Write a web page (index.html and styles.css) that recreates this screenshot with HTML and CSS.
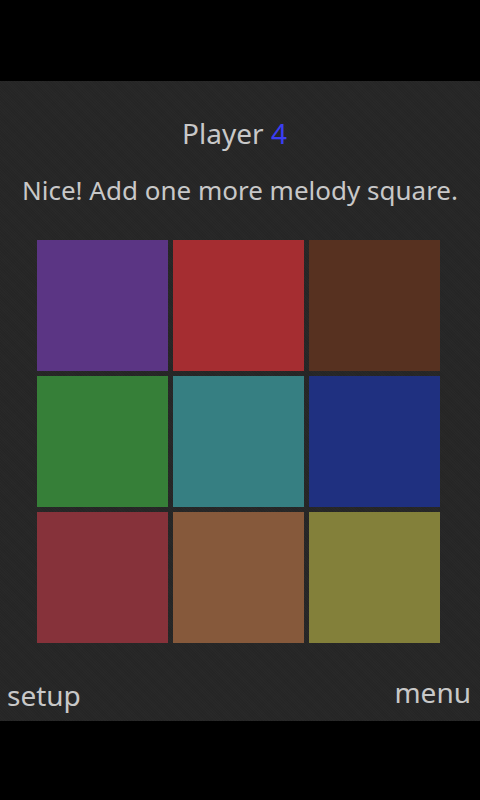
FILE: index.html
```html
<!DOCTYPE html>
<html>
<head>
<meta charset="utf-8">
<link rel="stylesheet" href="styles.css">
</head>
<body>
<div class="top"></div>
<div class="panel">
  <h1 class="title">Player <span class="num">4</span></h1>
  <p class="msg">Nice! Add one more melody square.</p>
  <div class="grid">
    <div class="sq purple"></div>
    <div class="sq red"></div>
    <div class="sq brown"></div>
    <div class="sq green"></div>
    <div class="sq teal"></div>
    <div class="sq blue"></div>
    <div class="sq maroon"></div>
    <div class="sq tan"></div>
    <div class="sq olive"></div>
  </div>
  <div class="footer">
    <span class="setup">setup</span>
    <span class="menu">menu</span>
  </div>
</div>
</body>
</html>
```

FILE: styles.css
```css
html, body {
  margin: 0;
  padding: 0;
  background: #000;
  width: 480px;
  height: 800px;
  overflow: hidden;
  font-family: "Noto Sans", "Open Sans", sans-serif;
}
.top {
  height: 81px;
}
.panel {
  height: 640px;
  background-color: #262626;
  background-image: repeating-linear-gradient(45deg, rgba(255,255,255,0.012) 0 1px, transparent 1px 2px),
                    repeating-linear-gradient(-45deg, rgba(0,0,0,0.03) 0 1px, transparent 1px 2px);
  display: flex;
  flex-direction: column;
  color: #c8c8c8;
}
.title {
  margin: 32px 11px 0 0;
  font-size: 28px;
  line-height: 40px;
  font-weight: normal;
  text-align: center;
}
.num {
  color: #3b3ef2;
}
.msg {
  margin: 19px 0 0 0;
  font-size: 26px;
  line-height: 36px;
  text-align: center;
}
.grid {
  margin: 32px 0 0 37px;
  display: grid;
  grid-template-columns: repeat(3, 131px);
  grid-auto-rows: 131px;
  gap: 5px;
}
.purple { background: #5b3584; }
.red { background: #a52d31; }
.brown { background: #573120; }
.green { background: #367f38; }
.teal { background: #367f82; }
.blue { background: #1f3080; }
.maroon { background: #86323a; }
.tan { background: #86593b; }
.olive { background: #83803a; }
.footer {
  margin-top: auto;
  display: flex;
  justify-content: space-between;
  align-items: flex-end;
  font-size: 28px;
  line-height: 28px;
}
.setup {
  margin: 0 0 12px 7px;
}
.menu {
  margin: 0 9px 15px 0;
}
```
